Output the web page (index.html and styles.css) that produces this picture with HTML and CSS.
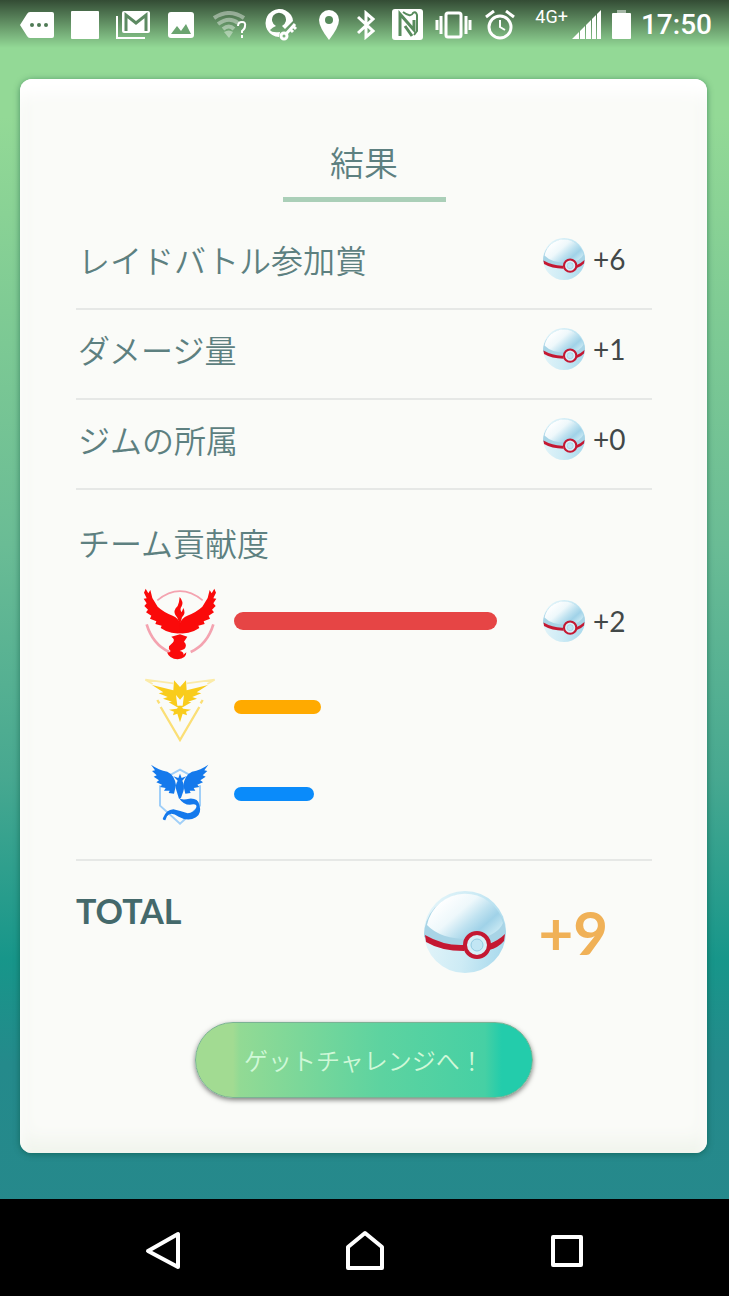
FILE: index.html
```
<!DOCTYPE html>
<html lang="ja">
	<head>
		<meta charset="utf-8">
		<meta name="viewport" content="width=device-width, initial-scale=1">
		<title>結果</title>
		<link rel="stylesheet" href="styles.css">
	</head>

	<body>
		<!-- shared ball symbol -->
		<svg class="defs" aria-hidden="true">
			<defs>
				<linearGradient id="ballTop" x1="0.15" y1="0.2" x2="0.95" y2="0.75">
					<stop offset="0" stop-color="#ffffff"/>
					<stop offset="0.35" stop-color="#eef8fb"/>
					<stop offset="0.6" stop-color="#bfe2f0"/>
					<stop offset="0.8" stop-color="#a0d2e8"/>
					<stop offset="1" stop-color="#c4e6f2"/>
				</linearGradient>
				<linearGradient id="ballBottom" x1="0" y1="0.6" x2="1" y2="0.8">
					<stop offset="0" stop-color="#e2f4f9"/>
					<stop offset="0.5" stop-color="#cdebf5"/>
					<stop offset="1" stop-color="#a6d8ec"/>
				</linearGradient>
				<symbol id="ball" viewBox="0 0 82 82">
					<circle cx="41" cy="41" r="41" fill="url(#ballBottom)"/>
					<path d="M0 46A41 41 0 1 1 82 43Q74 51 53 55Q20 58 0 46Z" fill="#a8d4e6"/>
					<path d="M3 34A39 39 0 0 1 79 32Q74 44 53 48Q18 50 3 34Z" fill="url(#ballTop)"/>
					<path d="M1 44Q20 55 40 54V60Q17 60 2 51ZM65 53Q75 49 81 43L80 50Q74 57 65 59Z" fill="#c41832"/>
					<circle cx="53" cy="54" r="12" fill="#d8f0f8" stroke="#c41832" stroke-width="4"/>
					<circle cx="53" cy="54" r="6" fill="#c2e6f4" stroke="#92cbe2"/>
				</symbol>
			</defs>
		</svg>

		<header class="status">
			<div class="icons notifications">
				<svg width="34" height="26" viewBox="0 0 34 26"><path d="M10 0H32Q34 0 34 2V24Q34 26 32 26H10Q8 26 7 24L0 13L7 2Q8 0 10 0Z" fill="#fff"/><g fill="#4f7a55"><circle cx="12" cy="13" r="2"/><circle cx="19" cy="13" r="2"/><circle cx="26" cy="13" r="2"/></g></svg>
				<svg width="28" height="28" viewBox="0 0 28 28"><rect width="28" height="28" rx="1" fill="#fff"/></svg>
				<svg width="35" height="30" viewBox="0 0 35 30"><path d="M1 6V28H29" fill="none" stroke="#fff" stroke-width="2"/><rect x="6" y="1" width="28" height="22" rx="2" fill="#fff"/><path d="M10 21V5L20 13L30 5V21" fill="none" stroke="#5d8a62" stroke-width="3"/></svg>
				<svg width="26" height="26" viewBox="0 0 26 26"><rect width="26" height="26" rx="3" fill="#fff"/><path d="M3 22L9 14L13 19L18 12L23 22Z" fill="#6ba470"/></svg>
				<svg width="36" height="28" viewBox="0 0 36 28"><g fill="none" stroke="#fff" stroke-width="4" opacity=".4"><path d="M3 7Q18-3 33 7"/><path d="M7 13Q18 5 27 12"/><path d="M12 18Q18 13 23 18"/></g><path d="M13 21Q18 18 22 21L18 27Z" fill="#fff" opacity=".4"/><path d="M27 15Q27 11 31 11T34 15Q34 18 31 20V22M31 24V27" fill="none" stroke="#fff" stroke-width="2"/></svg>
				<svg width="33" height="32" viewBox="0 0 33 32"><path d="M27 6A14 14 0 1 0 15 28L16 23Q8 24 6 21Q9 18 12 17A7 7 0 1 1 18 17L21 20L29 12Q29 9 27 6Z" fill="#fff"/><g fill="none" stroke="#fff" stroke-width="3"><circle cx="20" cy="27" r="3"/><path d="M22 25L31 15M26 20L29 23M29 17L32 20"/></g></svg>
				<svg width="26" height="30" viewBox="0 0 26 30"><path d="M15 0A10 10 0 0 0 5 10Q5 17 15 30Q25 17 25 10A10 10 0 0 0 15 0Z" fill="#fff"/><circle cx="15" cy="10" r="4" fill="#568a5b"/></svg>
				<svg width="18" height="30" viewBox="0 0 18 30"><path d="M1 7L16 21L9 27V3L16 9L1 23" fill="none" stroke="#fff" stroke-width="3"/></svg>
				<svg width="31" height="31" viewBox="0 0 31 31"><rect width="31" height="31" rx="3" fill="#fff"/><path d="M8 27V5L22 21V11" fill="none" stroke="#578b5c" stroke-width="3"/><path d="M11 3Q19 9 21 4Q24 2 25 6V22L22 26" fill="none" stroke="#578b5c" stroke-width="2"/><path d="M13 17L20 27" stroke="#578b5c" stroke-width="3"/></svg>
			</div>

			<div class="icons system">
				<div class="icons modes">
					<svg width="37" height="28" viewBox="0 0 37 28"><rect x="11" y="2" width="15" height="24" rx="2" fill="none" stroke="#fff" stroke-width="3"/><path d="M6 5V23M31 5V23M2 9V19M35 9V19" stroke="#fff" stroke-width="3"/></svg>
					<svg width="30" height="30" viewBox="0 0 30 30"><g fill="none" stroke="#fff" stroke-width="3"><circle cx="15" cy="17" r="11"/><path d="M1 7L9 1M29 7L21 1"/><path d="M15 10V17L20 20" stroke-width="2"/></g></svg>
				</div>
				<div class="network">
					<span>4G+</span>
					<svg width="30" height="29" viewBox="0 0 30 29"><path d="M0 29L7 22V29ZM8 21L13 16V29H8ZM14 15L19 10V29H14ZM20 9L24 5V29H20ZM25 4L29 0V29H25Z" fill="#fff"/></svg>
				</div>
				<svg width="19" height="29" viewBox="0 0 19 29"><path d="M5 0H14V3H5Z" fill="#fff" opacity=".5"/><rect y="3" width="19" height="26" rx="1" fill="#fff"/></svg>
				<time>17:50</time>
			</div>
		</header>

		<main>
			<section class="card">
				<h1 class="title">結果</h1>

				<div class="row">
					<h2 class="label">レイドバトル参加賞</h2>
					<div class="reward"><svg class="ball"><use href="#ball"/></svg>+6</div>
				</div>
				<div class="row">
					<h2 class="label">ダメージ量</h2>
					<div class="reward"><svg class="ball"><use href="#ball"/></svg>+1</div>
				</div>
				<div class="row">
					<h2 class="label">ジムの所属</h2>
					<div class="reward"><svg class="ball"><use href="#ball"/></svg>+0</div>
				</div>

				<div class="teams">
					<h2 class="label">チーム貢献度</h2>

					<div class="team valor">
						<svg class="emblem" viewBox="0 0 300 270">
							<g fill="none" stroke="#f4a3b0" stroke-width="5"><path d="M82 73Q150 18 218 73"/><path d="M50 145Q68 205 118 228M250 145Q232 205 182 228" stroke-width="8"/></g>
							<g fill="#fa0a0a">
								<path id="wing" d="M47 38L55 52L61 42L67 66L83 92Q100 108 128 119Q144 126 151 142V172Q128 174 108 165L92 156L95 149L76 144L79 136L60 128L64 119L48 109L54 101L43 90L50 82L41 68L50 67L42 50Z"/>
								<use href="#wing" transform="matrix(-1 0 0 1 300 0)"/>
								<path d="M149 63Q162 78 155 91Q148 101 155 109L160 96Q169 111 156 124L150 146L142 125Q128 111 137 97L143 90Q148 79 149 63Z"/>
								<path d="M124 182L150 175L172 182L162 197Q173 207 163 219L149 225Q163 228 160 236L169 229Q169 248 143 250Q118 249 111 229Q117 231 122 225Q114 218 117 211L128 200Q137 190 124 182Z"/>
							</g>
						</svg>
						<div class="track"><div class="bar" style="width: 85%"></div></div>
						<div class="reward"><svg class="ball"><use href="#ball"/></svg>+2</div>
					</div>

					<div class="team instinct">
						<svg class="emblem" viewBox="0 0 300 240">
							<path d="M68 51L46 38L130 49M232 51L254 38L170 49" fill="none" stroke="#fbeba8" stroke-width="5"/>
							<path d="M92 120L150 219L208 120M82 99L88 109M218 99L212 109" fill="none" stroke="#fbdf76" stroke-width="7"/>
							<g fill="#f9cc1c">
								<path id="bolt" d="M66 54L130 70L132 40L150 60V98L138 84L142 116H151V126L116 106L126 104L99 95L113 90L86 79L100 76Z"/>
								<use href="#bolt" transform="matrix(-1 0 0 1 300 0)"/>
								<path d="M117 128L140 125L150 118L160 125L183 128L168 134L171 145L158 140L150 166L142 140L129 145L132 134Z"/>
							</g>
						</svg>
						<div class="track"><div class="bar" style="width: 28%"></div></div>
					</div>

					<div class="team mystic">
						<svg class="emblem" viewBox="0 0 300 240">
							<path d="M106 71L150 47L194 71M90 94V155L150 209L210 155V94" fill="none" stroke="#a0cff8" stroke-width="6"/>
							<g fill="#1479ec">
								<path id="feather" d="M63 32Q86 48 112 53Q134 63 138 94L132 119L116 117L119 110L102 110L107 102L90 99L96 92L79 85L87 79L71 68L80 64L66 51L75 49Z"/>
								<use href="#feather" transform="matrix(-1 0 0 1 298 0)"/>
								<path d="M143 80L130 67L145 72L150 59L155 72L169 67L157 80Q165 95 160 112L153 132L147 134L139 109Q134 95 143 80Z"/>
								<path d="M146 131Q155 140 178 134Q204 132 208 152Q216 178 198 190Q174 204 146 188Q121 171 111 187L106 199Q96 198 99 192Q109 167 130 166Q150 170 173 178Q191 177 198 163Q203 151 190 151Q164 158 146 131Z"/>
							</g>
						</svg>
						<div class="track"><div class="bar" style="width: 26%"></div></div>
					</div>
				</div>

				<div class="total">
					<h2>TOTAL</h2>
					<svg class="ball"><use href="#ball"/></svg>
					<strong>+9</strong>
				</div>

				<button type="button" class="next">ゲットチャレンジへ！</button>
			</section>
		</main>

		<nav class="navbar">
			<button type="button" aria-label="戻る"><svg width="40" height="44" viewBox="0 0 40 44"><path d="M35 5V38L5 22Z"/></svg></button>
			<button type="button" aria-label="ホーム"><svg width="44" height="44" viewBox="0 0 44 44"><path d="M22 4L39 18V39H5V18Z"/></svg></button>
			<button type="button" aria-label="アプリ履歴"><svg width="40" height="44" viewBox="0 0 40 44"><path d="M6 8H34V36H6Z"/></svg></button>
		</nav>
	</body>
</html>
```
FILE: styles.css
```
:root {
	--text: #5d8080;
	--dark: #424848;
	--line: #e6e8e6;
	--card: #fafbf8;
	--orange: #f0b157;
}

* {
	box-sizing: border-box;
}

body {
	margin: 0;
	min-height: 100vh;
	display: flex;
	flex-direction: column;
	font-family: Lato, "Noto Sans CJK JP", sans-serif;
	color: var(--text);
	background: linear-gradient(#93d996 9%, #7fcb94 24%, #6abc95 42%, #47a890 60%, #17968a 74%, #248a8b 82%, #27888c);
}

h1, h2 {
	margin: 0;
	font-weight: 350;
}

svg {
	display: block;
	flex: none;
}

.defs {
	position: absolute;
	width: 0;
	height: 0;
}

.status {
	display: flex;
	justify-content: space-between;
	height: 48px;
	padding: 1px 17px 0 20px;
	background: linear-gradient(rgba(0, 0, 0, 0.65), rgba(0, 0, 0, 0));
	color: #fff;
	font-family: Roboto, sans-serif;
}

.icons {
	display: flex;
	align-items: center;
}

.notifications {
	gap: 17px;
}

.system {
	gap: 10px;
}

.modes {
	gap: 13px;
	margin-right: 10px;
}

.network {
	display: flex;
	gap: 4px;
	font-size: 18px;
	line-height: 14px;
}

.status time {
	font-size: 28px;
	font-weight: 500;
}

main {
	flex: 1;
	display: flex;
	padding: 31px 22px 46px 20px;
}

.card {
	flex: 1;
	display: flex;
	flex-direction: column;
	padding: 60px 55px 55px 56px;
	border-radius: 12px;
	background: var(--card);
	box-shadow: 0 1px 6px rgba(0, 70, 50, 0.5), inset 0 14px 16px #fff, inset 0 -12px 18px #f0f4ec;
}

.title {
	align-self: center;
	width: 163px;
	height: 63px;
	border-bottom: 5px solid #aacfb8;
	font-size: 34px;
	line-height: 48px;
	text-align: center;
}

.row {
	display: flex;
	align-items: center;
	justify-content: space-between;
	height: 90px;
	padding-bottom: 10px;
	border-bottom: 2px solid var(--line);
}

.title + .row {
	height: 108px;
	padding-top: 18px;
}

.label {
	padding: 4px 0 0 2px;
	font-size: 32px;
	line-height: 40px;
}

.reward {
	display: flex;
	align-items: center;
	gap: 8px;
	width: 109px;
	color: var(--dark);
	font-size: 28px;
	line-height: 40px;
}

.ball {
	width: 42px;
	height: 42px;
}

.teams {
	padding: 30px 0 22px;
	border-bottom: 2px solid var(--line);
}

.team {
	display: grid;
	grid-template-columns: 100px 1fr 109px;
	align-items: center;
	height: 87px;
	padding-left: 54px;
}

.teams .label {
	margin-bottom: 12px;
}

.emblem {
	width: 100px;
	height: 80px;
}

.valor .emblem {
	height: 90px;
}

.track {
	padding-left: 4px;
}

.bar {
	height: 14px;
	border-radius: 9px;
}

.valor .bar {
	height: 18px;
	background: #e64545;
}

.instinct .bar {
	background: #ffaa00;
}

.mystic .bar {
	background: #0a8bfa;
}

.total {
	display: flex;
	align-items: center;
	padding: 30px 44px 49px 0;
}

.total h2 {
	flex: 1;
	align-self: flex-start;
	color: #44696b;
	font-size: 34px;
	font-weight: 700;
	line-height: 40px;
}

.total .ball {
	width: 82px;
	height: 82px;
}

.total strong {
	margin-left: 32px;
	color: var(--orange);
	font-size: 60px;
	line-height: 72px;
}

.next {
	align-self: center;
	width: 338px;
	height: 76px;
	border: 1px solid #7bb294;
	border-radius: 38px;
	background: linear-gradient(90deg, #a2db92 11%, #92da94 13%, #5dd3a0 55%, #46d0a4 86%, #23ccab 91%);
	box-shadow: 0 2px 5px rgba(0, 0, 0, 0.5);
	color: #d0f8d8;
	font: 350 24px/40px "Noto Sans CJK JP", sans-serif;
}

.navbar {
	display: flex;
	justify-content: center;
	gap: 160px;
	height: 97px;
	padding-top: 6px;
	background: #000;
}

.navbar button {
	padding: 0;
	border: 0;
	background: none;
}

.navbar path {
	fill: none;
	stroke: #fff;
	stroke-width: 4;
	stroke-linejoin: round;
}
```
